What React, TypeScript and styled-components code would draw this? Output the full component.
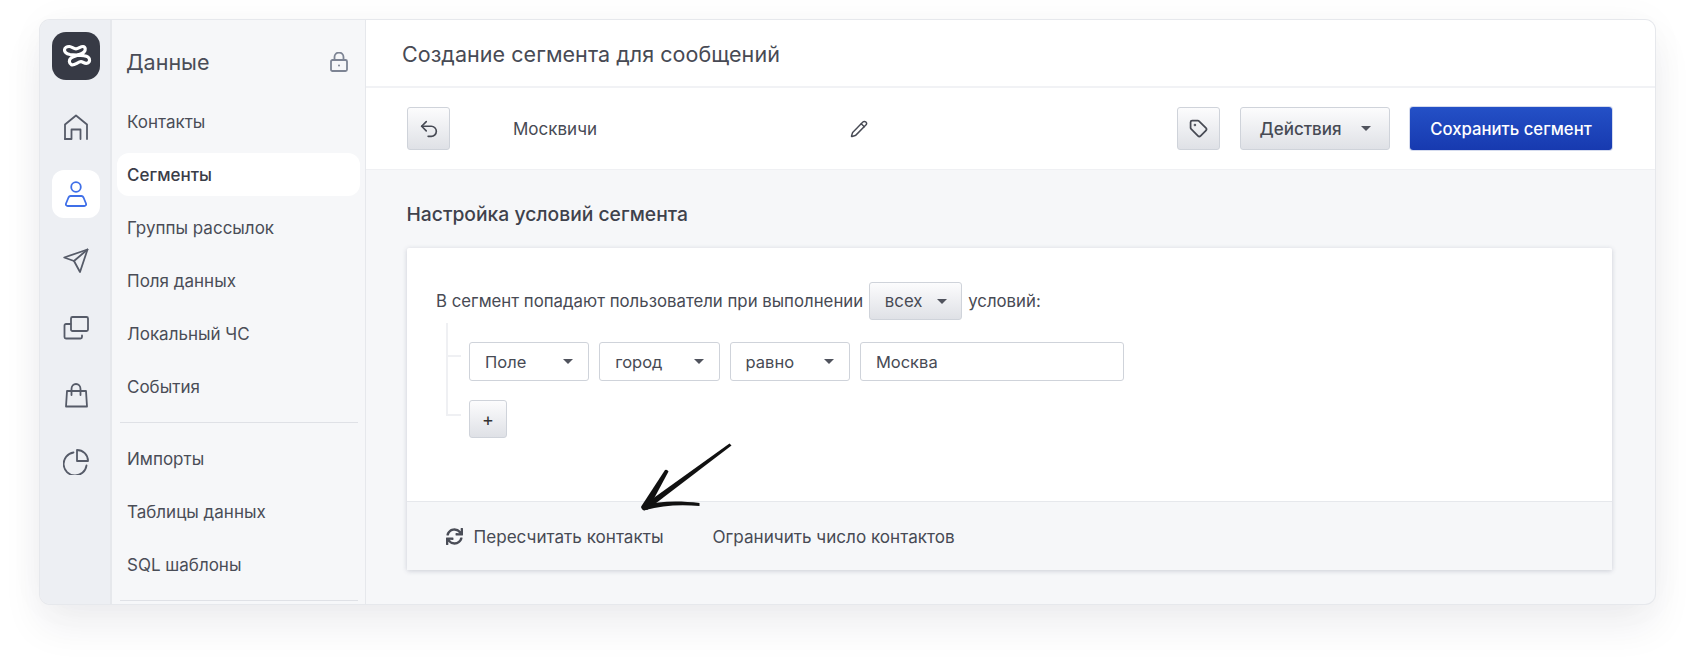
import React from 'react';
import styled, { createGlobalStyle } from 'styled-components';
import { Pencil, Tag, Undo2 } from 'lucide-react';
import { FaSync } from 'react-icons/fa';

const GlobalStyle = createGlobalStyle`
  html, body {
    margin: 0;
    padding: 0;
    background: #fff;
    font-family: Inter, "Noto Sans", sans-serif;
    color: #474a54;
  }
  * { box-sizing: border-box; }
`;

const Page = styled.div`
  padding: 20px 40px 0 40px;
  width: 1695px;
  height: 663px;
  overflow: hidden;
`;

const Frame = styled.div`
  position: relative;
  display: flex;
  height: 584px;
  border-radius: 10px;
  background: #f6f7f9;
  box-shadow: 0 0 0 1px #e6e8ec, 0 22px 40px rgba(30, 34, 50, 0.07), 0 0 40px rgba(30, 34, 50, 0.03);
  overflow: hidden;
`;

const Rail = styled.div`
  width: 72px;
  flex: none;
  display: flex;
  flex-direction: column;
  align-items: center;
  gap: 19px;
  padding: 12px 0 0 2px;
  background: #edeff3;
  border-right: 2px solid #e6e8ec;
`;

const Logo = styled.div`
  width: 48px;
  height: 48px;
  border-radius: 14px;
  background: #373a45;
  margin-bottom: 4px;
  display: flex;
  align-items: center;
  justify-content: center;
`;

const RailItem = styled.div<{ $active?: boolean }>`
  width: 48px;
  height: 48px;
  border-radius: 12px;
  display: flex;
  align-items: center;
  justify-content: center;
  background: ${(p) => (p.$active ? '#fff' : 'transparent')};
  color: ${(p) => (p.$active ? '#3f6fe8' : '#565b68')};
`;

const Sidebar = styled.div`
  width: 254px;
  flex: none;
  padding: 0 5px;
  background: #f6f7f9;
  border-right: 1px solid #e6e8ec;
`;

const SideHead = styled.div`
  height: 80px;
  padding: 12px 12px 8px 9px;
  display: flex;
  align-items: center;
  justify-content: space-between;
  font-size: 21.5px;
  color: #4a4d57;
`;

const MenuItem = styled.div<{ $active?: boolean }>`
  height: 43px;
  margin-bottom: 10px;
  padding-left: 10px;
  display: flex;
  align-items: center;
  font-size: 17px;
  border-radius: 12px;
  color: ${(p) => (p.$active ? '#3a3d47' : '#4a4d57')};
  font-weight: ${(p) => (p.$active ? 500 : 400)};
  background: ${(p) => (p.$active ? '#fff' : 'transparent')};
`;

const Divider = styled.div`
  height: 1px;
  margin: 14px 2px 14px 3px;
  background: #dfe1e6;
`;

const Main = styled.div`
  flex: 1;
  min-width: 0;
  display: flex;
  flex-direction: column;
`;

const TitleBar = styled.div`
  height: 68px;
  padding: 2px 36px 0;
  flex: none;
  display: flex;
  align-items: center;
  background: #fff;
  border-bottom: 2px solid #f1f2f5;
  font-size: 21.5px;
  letter-spacing: 0.05px;
  color: #474a54;
`;

const Toolbar = styled.div`
  height: 82px;
  padding: 0 43px 0 41px;
  flex: none;
  display: flex;
  align-items: center;
  background: #fff;
  border-bottom: 1px solid #eff0f3;
`;

const GreyButton = styled.div`
  height: 43px;
  display: flex;
  align-items: center;
  justify-content: center;
  border: 1px solid #cfd3da;
  border-radius: 3px;
  background: linear-gradient(#fcfcfd, #dfe1e6);
  color: #474a54;
  font-size: 17px;
`;

const IconButton = styled(GreyButton)<{ $w: number }>`
  width: ${(p) => p.$w}px;
`;

const ActionsButton = styled(GreyButton)`
  width: 150px;
  margin-left: 20px;
  gap: 19px;
  font-weight: 500;
`;

const SaveButton = styled.div`
  width: 202px;
  height: 43px;
  margin-left: 20px;
  display: flex;
  align-items: center;
  justify-content: center;
  border-radius: 3px;
  background: linear-gradient(#2450c6, #173ab0);
  box-shadow: 0 0 0 1px #d5dbee;
  color: #fff;
  font-size: 16.7px;
  font-weight: 500;
`;

const SegmentName = styled.div`
  width: 355px;
  margin-left: 63px;
  display: flex;
  align-items: center;
  justify-content: space-between;
  font-size: 17px;
  color: #474a54;
`;

const Spacer = styled.div`
  flex: 1;
`;

const Content = styled.div`
  flex: 1;
  padding: 0 43px 0 40.5px;
`;

const SectionTitle = styled.div`
  height: 78px;
  padding-top: 10px;
  display: flex;
  align-items: center;
  font-size: 19.3px;
  font-weight: 500;
  color: #3f424c;
`;

const Card = styled.div`
  height: 322px;
  display: flex;
  flex-direction: column;
  background: #fff;
  border-radius: 2px;
  box-shadow: 0 1px 5px rgba(50, 60, 90, 0.22);
`;

const CardBody = styled.div`
  flex: 1;
  padding: 34px 29px 0 29.5px;
`;

const ConditionLine = styled.div`
  display: flex;
  align-items: center;
  gap: 6px;
  height: 38px;
  font-size: 16.8px;
  color: #474a54;
`;

const AllButton = styled(GreyButton)`
  width: 93px;
  height: 38px;
  gap: 14px;
  font-size: 16.8px;
`;

const Tree = styled.div`
  position: relative;
  margin-top: 3px;
  padding: 19px 0 0 33px;
`;

const TreeTrunk = styled.div`
  position: absolute;
  left: 10px;
  top: 0;
  width: 15px;
  height: 93px;
  border-left: 2px solid #eff0f3;
  border-bottom: 2px solid #eff0f3;
`;

const TreeBranch = styled.div`
  position: absolute;
  left: 10px;
  top: 32px;
  width: 15px;
  height: 2px;
  background: #eff0f3;
`;

const Row = styled.div`
  display: flex;
  gap: 10px;
`;

const SelectBox = styled.div`
  width: 120.3px;
  height: 39px;
  padding: 0 15px;
  display: flex;
  align-items: center;
  justify-content: space-between;
  background: #fff;
  border: 1px solid #cfd3da;
  border-radius: 3px;
  font-size: 16.5px;
  color: #474a54;
`;

const InputBox = styled(SelectBox)`
  width: 264px;
`;

const AddButton = styled(GreyButton)`
  width: 38px;
  height: 38px;
  margin-top: 19px;
  font-size: 18px;
  color: #333;
`;

const Caret = styled.span`
  width: 0;
  height: 0;
  border-left: 5px solid transparent;
  border-right: 5px solid transparent;
  border-top: 5.5px solid #50535d;
`;

const CardFooter = styled.div`
  height: 69px;
  padding-left: 39px;
  display: flex;
  align-items: center;
  gap: 49px;
  background: #f6f7f9;
  border-top: 1px solid #e6e8ec;
  font-size: 17.1px;
  color: #474a54;
`;

const Recalc = styled.div`
  display: flex;
  align-items: center;
  gap: 11px;
`;

const ArrowMark = styled.svg`
  position: absolute;
  left: 560px;
  top: 410px;
`;

const items = ['Контакты', 'Сегменты', 'Группы рассылок', 'Поля данных', 'Локальный ЧС', 'События'];
const items2 = ['Импорты', 'Таблицы данных', 'SQL шаблоны'];

const Ico: React.FC<{ children: React.ReactNode; size?: number }> = ({ children, size = 26 }) => (
  <svg width={size} height={size} viewBox="0 0 26 26" fill="none" stroke="currentColor" strokeWidth="1.8" strokeLinecap="round" strokeLinejoin="round">
    {children}
  </svg>
);

const App: React.FC = () => {
  return (
    <Page>
      <GlobalStyle />
      <Frame>
        <Rail>
          <Logo>
            <svg width="48" height="48" viewBox="0 0 48 48" fill="none" stroke="#fff" strokeWidth="3.2" strokeLinecap="round" strokeLinejoin="round">
              <path d="M12.500 18C12.500 15.500 15 14.300 17.500 14.500C20 14.800 21.500 16.800 24 16.800C26.500 16.800 28.500 14.300 31 14.500C33.500 14.800 34 18 32 20C29 23 22 23.500 19 26C16.500 28 17 31.500 19.500 32.800C22.500 33.800 26 29.700 29 29.700C31 29.700 32.500 32 35 31.300C38 30.500 38.500 27 36 25C32 22.500 24 23.500 18 22.500C14.500 21.800 12.500 20.500 12.500 18Z" />
            </svg>
          </Logo>
          <RailItem>
            <Ico>
              <path d="M2 25V10.500L13 1.500l11 9V25" />
              <path d="M2 25h6.500v-9.500h9V25" />
            </Ico>
          </RailItem>
          <RailItem $active>
            <Ico>
              <circle cx="13" cy="6" r="4.800" />
              <path d="M7.500 15h11c1 0 1.500.5 2 1.500l2.500 6c.5 1.500-.3 2.500-1.800 2.500H4.800C3.300 25 2.500 24 3 22.500l2.500-6c.5-1 1-1.500 2-1.500z" />
            </Ico>
          </RailItem>
          <RailItem>
            <Ico>
              <path d="M1.200 9.500 24.500 1.500 17 24l-6-11z" />
              <path d="M24.500 1.500 11 13" />
            </Ico>
          </RailItem>
          <RailItem>
            <Ico>
              <rect x="8" y="2" width="17" height="14" rx="1.500" />
              <path d="M7.500 9H3a1.500 1.500 0 0 0-1.500 1.500V22A1.500 1.500 0 0 0 3 23.500h14.500A1.500 1.500 0 0 0 19 22v-1.500" />
            </Ico>
          </RailItem>
          <RailItem>
            <Ico>
              <path d="M4 9h19l1 15.500H3z" />
              <path d="M8.500 13V7a4.500 5 0 0 1 9 0v6" />
            </Ico>
          </RailItem>
          <RailItem>
            <Ico>
              <path d="M10.500 3.500A11.500 11.500 0 1 0 23.500 16.500" />
              <path d="M14 1a11 11 0 0 1 11 11H14z" />
            </Ico>
          </RailItem>
        </Rail>
        <Sidebar>
          <SideHead>
            Данные
            <svg width="18" height="20" viewBox="0 0 18 20" fill="none" stroke="#7d8494" strokeWidth="1.800">
              <rect x="1" y="8" width="16" height="11" rx="1.500" />
              <path d="M4.500 8V5a4.500 4.500 0 0 1 9 0v3" />
              <circle cx="9" cy="13.500" r="1" fill="#7d8494" stroke="none" />
            </svg>
          </SideHead>
          {items.map((item, index) => (
            <MenuItem key={index} $active={item === 'Сегменты'}>{item}</MenuItem>
          ))}
          <Divider />
          {items2.map((item, index) => (
            <MenuItem key={index}>{item}</MenuItem>
          ))}
          <Divider />
        </Sidebar>
        <Main>
          <TitleBar>Создание сегмента для сообщений</TitleBar>
          <Toolbar>
            <IconButton $w={43}><Undo2 size={22} strokeWidth={1.8} /></IconButton>
            <SegmentName>
              Москвичи
              <Pencil size={18} strokeWidth={1.9} />
            </SegmentName>
            <Spacer />
            <IconButton $w={43}><Tag size={19} strokeWidth={2.2} /></IconButton>
            <ActionsButton>Действия <Caret /></ActionsButton>
            <SaveButton>Сохранить сегмент</SaveButton>
          </Toolbar>
          <Content>
            <SectionTitle>Настройка условий сегмента</SectionTitle>
            <Card>
              <CardBody>
                <ConditionLine>
                  В сегмент попадают пользователи при выполнении
                  <AllButton>всех <Caret /></AllButton>
                  условий:
                </ConditionLine>
                <Tree>
                  <TreeTrunk />
                  <TreeBranch />
                  <Row>
                    <SelectBox>Поле <Caret /></SelectBox>
                    <SelectBox>город <Caret /></SelectBox>
                    <SelectBox>равно <Caret /></SelectBox>
                    <InputBox>Москва</InputBox>
                  </Row>
                  <AddButton>+</AddButton>
                </Tree>
              </CardBody>
              <CardFooter>
                <Recalc><FaSync size={17} color="#4a4d57" /> Пересчитать контакты</Recalc>
                <span>Ограничить число контактов</span>
              </CardFooter>
            </Card>
          </Content>
        </Main>
        <ArrowMark width="140" height="90" viewBox="0 0 140 90">
          <path d="M129.500 13.500 131.500 15.500 47 80 41 77z" fill="#111" />
          <path d="M65 40Q67 39 68.500 41.500L50 76 44 80.500Q40.500 79 41.500 76z" fill="#111" />
          <path d="M42 76C60 70.500 80 71 99.500 73L99.500 76C80 74 60 75.500 44 80.500z" fill="#111" />
        </ArrowMark>
      </Frame>
    </Page>
  );
};

export default App;
